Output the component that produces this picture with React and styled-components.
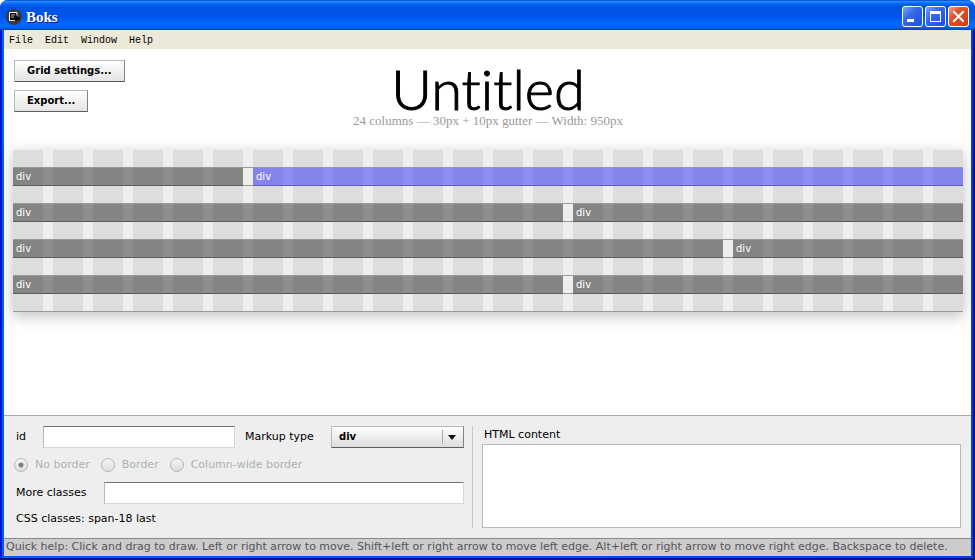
import React, { useState } from 'react';
import styled, { createGlobalStyle } from 'styled-components';

const GlobalStyle = createGlobalStyle`
  *, *::before, *::after {
    box-sizing: border-box;
  }

  body {
    margin: 0;
    background: #ffffff;
    font-family: 'DejaVu Sans', Verdana, sans-serif;
    font-size: 11px;
    line-height: 14px;
    color: #000000;
  }

  button, input, select, textarea {
    font: inherit;
    color: inherit;
    margin: 0;
  }
`;

const Window = styled.div`
  display: flex;
  flex-direction: column;
  min-height: 100vh;
  border-radius: 8px 8px 0 0;
  overflow: hidden;
  background: #0040e0;
`;

const TitleBar = styled.header`
  display: flex;
  align-items: center;
  gap: 4px;
  height: 30px;
  padding: 3px 6px 0;
  background: linear-gradient(
    #0046c8 0%,
    #2a86fa 5%,
    #127dff 8%,
    #0262ee 14%,
    #0054e3 24%,
    #0055eb 56%,
    #0268fe 78%,
    #0066f8 92%,
    #0040ab 100%
  );
`;

const WindowTitle = styled.h1`
  flex: 1;
  margin: 0;
  font-family: 'Liberation Serif', 'Times New Roman', serif;
  font-size: 15px;
  line-height: 16px;
  color: #ffffff;
  text-shadow: 1px 1px 0 #0a1883;
`;

const WindowControls = styled.div`
  display: flex;
  gap: 2px;
`;

const ControlButton = styled.button`
  display: flex;
  width: 21px;
  height: 21px;
  padding: 0;
  border: 1px solid #ffffff;
  border-radius: 3px;
  background: ${({ $close }) =>
    $close
      ? 'linear-gradient(135deg, #f0a088 0%, #e2532c 35%, #c83c12 100%)'
      : 'linear-gradient(135deg, #7ba4f8 0%, #3468ea 40%, #1e50d8 100%)'};
`;

const Body = styled.div`
  flex: 1;
  display: flex;
  flex-direction: column;
  padding: 0 2px 2px;
  border: solid;
  border-width: 0 2px 2px;
  border-color: #0019c8 #001590 #001590 #0019c8;
  background: linear-gradient(90deg, #0a5cf0, #0040e0);
`;

const MenuBar = styled.nav`
  display: flex;
  gap: 12px;
  height: 19px;
  padding: 3px 5px 0;
  background: #ece9d8;
`;

const MenuItem = styled.button`
  padding: 0;
  border: none;
  background: none;
  font-family: 'Liberation Mono', 'Courier New', monospace;
  font-size: 10px;
`;

const Canvas = styled.main`
  flex: 1;
  padding: 11px 8px 0 9px;
  background: #ffffff;
`;

const CanvasHeader = styled.div`
  display: grid;
  grid-template-columns: 1fr auto 1fr;
  height: 90px;
`;

const Actions = styled.div`
  display: flex;
  flex-direction: column;
  align-items: flex-start;
  gap: 8px;
  padding-left: 1px;
`;

const ActionButton = styled.button`
  height: 22px;
  padding: 0 12px;
  border: 1px solid;
  border-color: #b7babc #7f8283 #5b5d5e #b7babc;
  background: linear-gradient(#ffffff, #e4e4e4);
  font-size: 10px;
  font-weight: bold;
`;

const DocumentInfo = styled.div`
  padding-top: 2px;
  text-align: center;
`;

const DocumentTitle = styled.h2`
  margin: 0;
  font-family: Lato, sans-serif;
  font-size: 56px;
  font-weight: 300;
  font-variant-ligatures: none;
  line-height: 54px;
  -webkit-text-stroke: 1px #000000;
`;

const DocumentMeta = styled.p`
  margin: 0;
  font-family: 'Liberation Serif', Georgia, serif;
  font-size: 13px;
  line-height: 10px;
  color: #999999;
`;

const Layout = styled.div`
  display: grid;
  border-bottom: 1px solid #999999;
  background: #eeeeee;
  box-shadow: 0 4px 14px rgba(0, 0, 0, 0.25);
`;

const Columns = styled.div`
  grid-area: 1 / 1;
  display: grid;
  grid-template-columns: repeat(24, 1fr);
  gap: 10px;
`;

const Column = styled.div`
  background: #dddddd;
`;

const Rows = styled.div`
  grid-area: 1 / 1;
  display: flex;
  flex-direction: column;
  gap: 17px;
  padding: 17px 0;
`;

const Row = styled.div`
  display: grid;
  grid-template-columns: repeat(24, 1fr);
  column-gap: 10px;
  height: 19px;
  border-top: 1px solid #999999;
  box-shadow: inset 0 -1px #999999;
`;

const Block = styled.div`
  grid-column: span ${({ $span }) => $span};
  padding: 2px 3px 0;
  background: ${({ $selected }) => ($selected ? 'rgba(0, 0, 255, 0.4)' : 'rgba(0, 0, 0, 0.4)')};
  font-size: 10px;
  color: #ffffff;
`;

const Inspector = styled.section`
  display: flex;
  padding: 10px;
  border-top: 1px solid #aaaaaa;
  background: #eeeeee;
`;

const Properties = styled.div`
  display: flex;
  flex-direction: column;
  width: 459px;
  padding-right: 8px;
  border-right: 1px solid #c4cccc;
`;

const Field = styled.div`
  display: flex;
  align-items: center;
  height: 22px;
  padding-left: 2px;
`;

const FieldLabel = styled.label`
  flex: none;
  width: ${({ $width }) => $width};
`;

const MarkupLabel = styled(FieldLabel)`
  padding-left: 10px;
`;

const TextInput = styled.input`
  flex: 1;
  min-width: 0;
  height: 22px;
  padding: 0 4px;
  border: 1px solid;
  border-color: #6f7273 #d5d8d9 #d5d8d9 #b7babc;
  border-radius: 0;
  background: #ffffff;
`;

const SelectWrap = styled.div`
  position: relative;
  width: 133px;
  height: 22px;
`;

const Select = styled.select`
  appearance: none;
  width: 100%;
  height: 22px;
  padding: 0 24px 0 7px;
  border: 1px solid;
  border-color: #b7babc #7f8283 #5b5d5e #b7babc;
  border-radius: 0;
  background: linear-gradient(#ffffff, #dcdcdc);
  font-size: 10px;
  font-weight: bold;
`;

const SelectArrow = styled.svg`
  position: absolute;
  top: 4px;
  right: 4px;
  pointer-events: none;
`;

const BorderOptions = styled.fieldset`
  display: flex;
  gap: 11px;
  margin: 10px 0;
  padding: 0;
  border: none;
`;

const RadioLabel = styled.label`
  display: flex;
  align-items: center;
  gap: 7px;
  color: #aab3b3;
`;

const Radio = styled.input`
  appearance: none;
  width: 14px;
  height: 14px;
  border: 1px solid #b4b8b9;
  border-radius: 50%;
  background: linear-gradient(#f4f4f4, #dedede);

  &:checked {
    background: radial-gradient(circle, #808080 0 2px, transparent 3px),
      linear-gradient(#f4f4f4, #dedede);
  }
`;

const ClassList = styled.p`
  margin: 8px 0 0;
  padding-left: 2px;
`;

const Content = styled.div`
  flex: 1;
  display: flex;
  flex-direction: column;
  gap: 2px;
  padding: 2px 0 0 9px;
`;

const ContentLabel = styled.label`
  padding-left: 2px;
`;

const ContentArea = styled.textarea`
  flex: 1;
  width: 100%;
  min-height: 84px;
  border: 1px solid #b7babc;
  background: #ffffff;
  resize: none;
`;

const HelpBar = styled.footer`
  min-height: 18px;
  padding: 1px 2px 2px;
  border-top: 1px solid #888888;
  background: #cccccc;
  color: #555555;
`;

const menus = ['File', 'Edit', 'Window', 'Help'];

const rows = [
  [{ span: 6 }, { span: 18, selected: true }],
  [{ span: 14 }, { span: 10 }],
  [{ span: 18 }, { span: 6 }],
  [{ span: 14 }, { span: 10 }],
];

const borders = ['No border', 'Border', 'Column-wide border'];

const AppIcon = () => (
  <svg width="16" height="16" viewBox="0 0 16 16" aria-hidden="true">
    <circle cx="8" cy="8" r="8" fill="#3a3a3c" />
    <path d="M4 4h7v8H4z" fill="#0c0c0c" />
    <path d="M3.5 11.5v-8h7.500v3" stroke="#fff" fill="none" />
    <path d="M5 6h4M5 8h3" stroke="#aaa" />
    <path d="M8 8h6v3H10z" fill="#050505" />
    <path d="M3 11.500h6" stroke="#ddd" />
  </svg>
);

const App = () => {
  const [id, setId] = useState('');
  const [classes, setClasses] = useState('');
  const [content, setContent] = useState('');

  return (
    <>
      <GlobalStyle />
      <Window>
        <TitleBar>
          <AppIcon />
          <WindowTitle>Boks</WindowTitle>
          <WindowControls>
            <ControlButton aria-label="Minimize">
              <svg width="19" height="19" viewBox="0 0 19 19">
                <path d="M4 12h7v3H4z" fill="#fff" />
              </svg>
            </ControlButton>
            <ControlButton aria-label="Maximize">
              <svg width="19" height="19" viewBox="0 0 19 19">
                <path d="M4 4h11v11H4zM5 7v7h9V7z" fill="#fff" fillRule="evenodd" />
              </svg>
            </ControlButton>
            <ControlButton $close aria-label="Close">
              <svg width="19" height="19" viewBox="0 0 19 19">
                <path d="M5 5l9 9M14 5l-9 9" stroke="#fff" strokeWidth="2" strokeLinecap="square" />
              </svg>
            </ControlButton>
          </WindowControls>
        </TitleBar>
        <Body>
          <MenuBar>
            {menus.map((menu) => (
              <MenuItem key={menu}>{menu}</MenuItem>
            ))}
          </MenuBar>
          <Canvas>
            <CanvasHeader>
              <Actions>
                <ActionButton>Grid settings...</ActionButton>
                <ActionButton>Export...</ActionButton>
              </Actions>
              <DocumentInfo>
                <DocumentTitle>Untitled</DocumentTitle>
                <DocumentMeta>24 columns — 30px + 10px gutter — Width: 950px</DocumentMeta>
              </DocumentInfo>
            </CanvasHeader>
            <Layout>
              <Columns>
                {Array.from({ length: 24 }, (_, i) => (
                  <Column key={i} />
                ))}
              </Columns>
              <Rows>
                {rows.map((blocks, i) => (
                  <Row key={i}>
                    {blocks.map((block, j) => (
                      <Block key={j} $span={block.span} $selected={block.selected}>
                        div
                      </Block>
                    ))}
                  </Row>
                ))}
              </Rows>
            </Layout>
          </Canvas>
          <Inspector>
            <Properties>
              <Field>
                <FieldLabel htmlFor="block-id" $width="27px">id</FieldLabel>
                <TextInput id="block-id" value={id} onChange={(e) => setId(e.target.value)} />
                <MarkupLabel htmlFor="markup" $width="96px">Markup type</MarkupLabel>
                <SelectWrap>
                  <Select id="markup" defaultValue="div">
                    <option>div</option>
                  </Select>
                  <SelectArrow width="18" height="14" viewBox="0 0 18 14">
                    <path d="M0.500 0v14" stroke="#a9abac" />
                    <path d="M6 5h8l-4 5z" fill="#111" />
                  </SelectArrow>
                </SelectWrap>
              </Field>
              <BorderOptions disabled>
                {borders.map((border, i) => (
                  <RadioLabel key={border}>
                    <Radio type="radio" name="border" defaultChecked={i === 0} />
                    {border}
                  </RadioLabel>
                ))}
              </BorderOptions>
              <Field>
                <FieldLabel htmlFor="more-classes" $width="88px">More classes</FieldLabel>
                <TextInput
                  id="more-classes"
                  value={classes}
                  onChange={(e) => setClasses(e.target.value)}
                />
              </Field>
              <ClassList>CSS classes: span-18 last</ClassList>
            </Properties>
            <Content>
              <ContentLabel htmlFor="html-content">HTML content</ContentLabel>
              <ContentArea
                id="html-content"
                value={content}
                onChange={(e) => setContent(e.target.value)}
              />
            </Content>
          </Inspector>
          <HelpBar>
            Quick help: Click and drag to draw. Left or right arrow to move. Shift+left or right
            arrow to move left edge. Alt+left or right arrow to move right edge. Backspace to
            delete.
          </HelpBar>
        </Body>
      </Window>
    </>
  );
};

export default App;
